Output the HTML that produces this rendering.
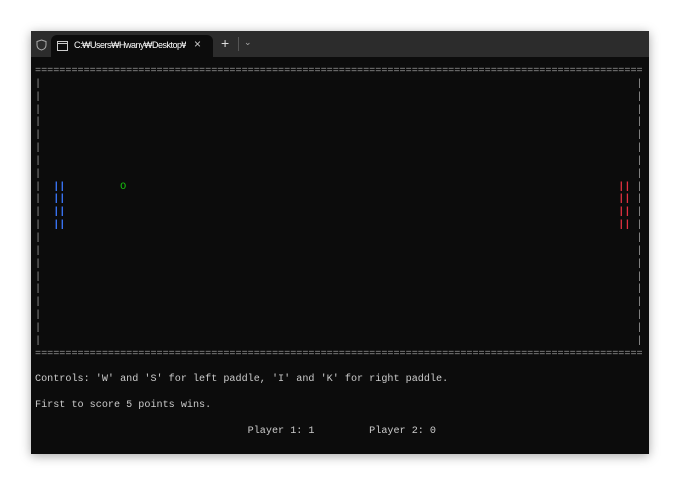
<!DOCTYPE html>
<html><head><style>
body{margin:0;width:680px;height:484px;background:#fff;overflow:hidden;position:relative}
.win{position:absolute;left:31px;top:31px;width:618px;height:423px;background:#0c0c0c;box-shadow:0 2px 10px rgba(0,0,0,.35)}
.tb{position:absolute;left:0;top:0;width:618px;height:26px;background:#2c2c2c}
.tab{position:absolute;left:20px;top:4px;width:162px;height:24px;background:#0c0c0c;border-radius:6px 6px 0 0}
.tt{position:absolute;left:23px;top:5px;font:9px "Liberation Sans",sans-serif;color:#fff;letter-spacing:-0.5px;white-space:nowrap;width:112px;overflow:hidden}
.t{position:absolute;left:4px;top:35px;font:10.15px/12.85px "Liberation Mono",monospace;color:#ccc;white-space:pre}
.t span{position:absolute;white-space:pre}
</style></head><body>
<div class="win">
<div class="tb">
<svg style="position:absolute;left:5px;top:8px" width="11" height="12" viewBox="0 0 11 12"><path d="M5.5 1 L10 2.5 V6 C10 9 7.5 10.5 5.5 11 C3.5 10.5 1 9 1 6 V2.5 Z" fill="none" stroke="#aaa" stroke-width="1"/></svg>
<div class="tab">
<svg style="position:absolute;left:6px;top:6px" width="11" height="10" viewBox="0 0 11 10"><rect x="0.5" y="0.5" width="10" height="9" fill="none" stroke="#ccc"/><line x1="0.5" y1="2.5" x2="10.5" y2="2.5" stroke="#ccc"/></svg>
<div class="tt">C:₩Users₩Hwany₩Desktop₩py</div>
<div style="position:absolute;left:143px;top:2px;color:#ccc;font:12px 'Liberation Sans',sans-serif">×</div>
</div>
<div style="position:absolute;left:190px;top:4px;color:#ddd;font:14px 'Liberation Sans',sans-serif">+</div>
<div style="position:absolute;left:207px;top:6px;width:1px;height:14px;background:#555"></div>
<div style="position:absolute;left:213px;top:6px;color:#aaa;font:9px 'Liberation Sans',sans-serif">⌄</div>
</div>
<div class="t">
<span style="left:0;top:0;color:#999">====================================================================================================</span>
<span style="left:0;top:12.85px;color:#999">|<br>|<br>|<br>|<br>|<br>|<br>|<br>|<br>|<br>|<br>|<br>|<br>|<br>|<br>|<br>|<br>|<br>|<br>|<br>|<br>|</span>
<span style="left:99ch;top:12.85px;color:#999">|<br>|<br>|<br>|<br>|<br>|<br>|<br>|<br>|<br>|<br>|<br>|<br>|<br>|<br>|<br>|<br>|<br>|<br>|<br>|<br>|</span>
<span style="left:0;top:282.7px;color:#999">====================================================================================================</span>
<span style="left:3ch;top:115.65px;color:#3b78ff;font-weight:bold">||<br>||<br>||<br>||</span>
<span style="left:96ch;top:115.65px;color:#e0303f;font-weight:bold">||<br>||<br>||<br>||</span>
<span style="left:14ch;top:115.65px;color:#16c60c">O</span>
<span style="left:0;top:308.4px">Controls: 'W' and 'S' for left paddle, 'I' and 'K' for right paddle.</span>
<span style="left:0;top:334.1px">First to score 5 points wins.</span>
<span style="left:35ch;top:359.8px">Player 1: 1         Player 2: 0</span>
</div>
</div>
</body></html>
